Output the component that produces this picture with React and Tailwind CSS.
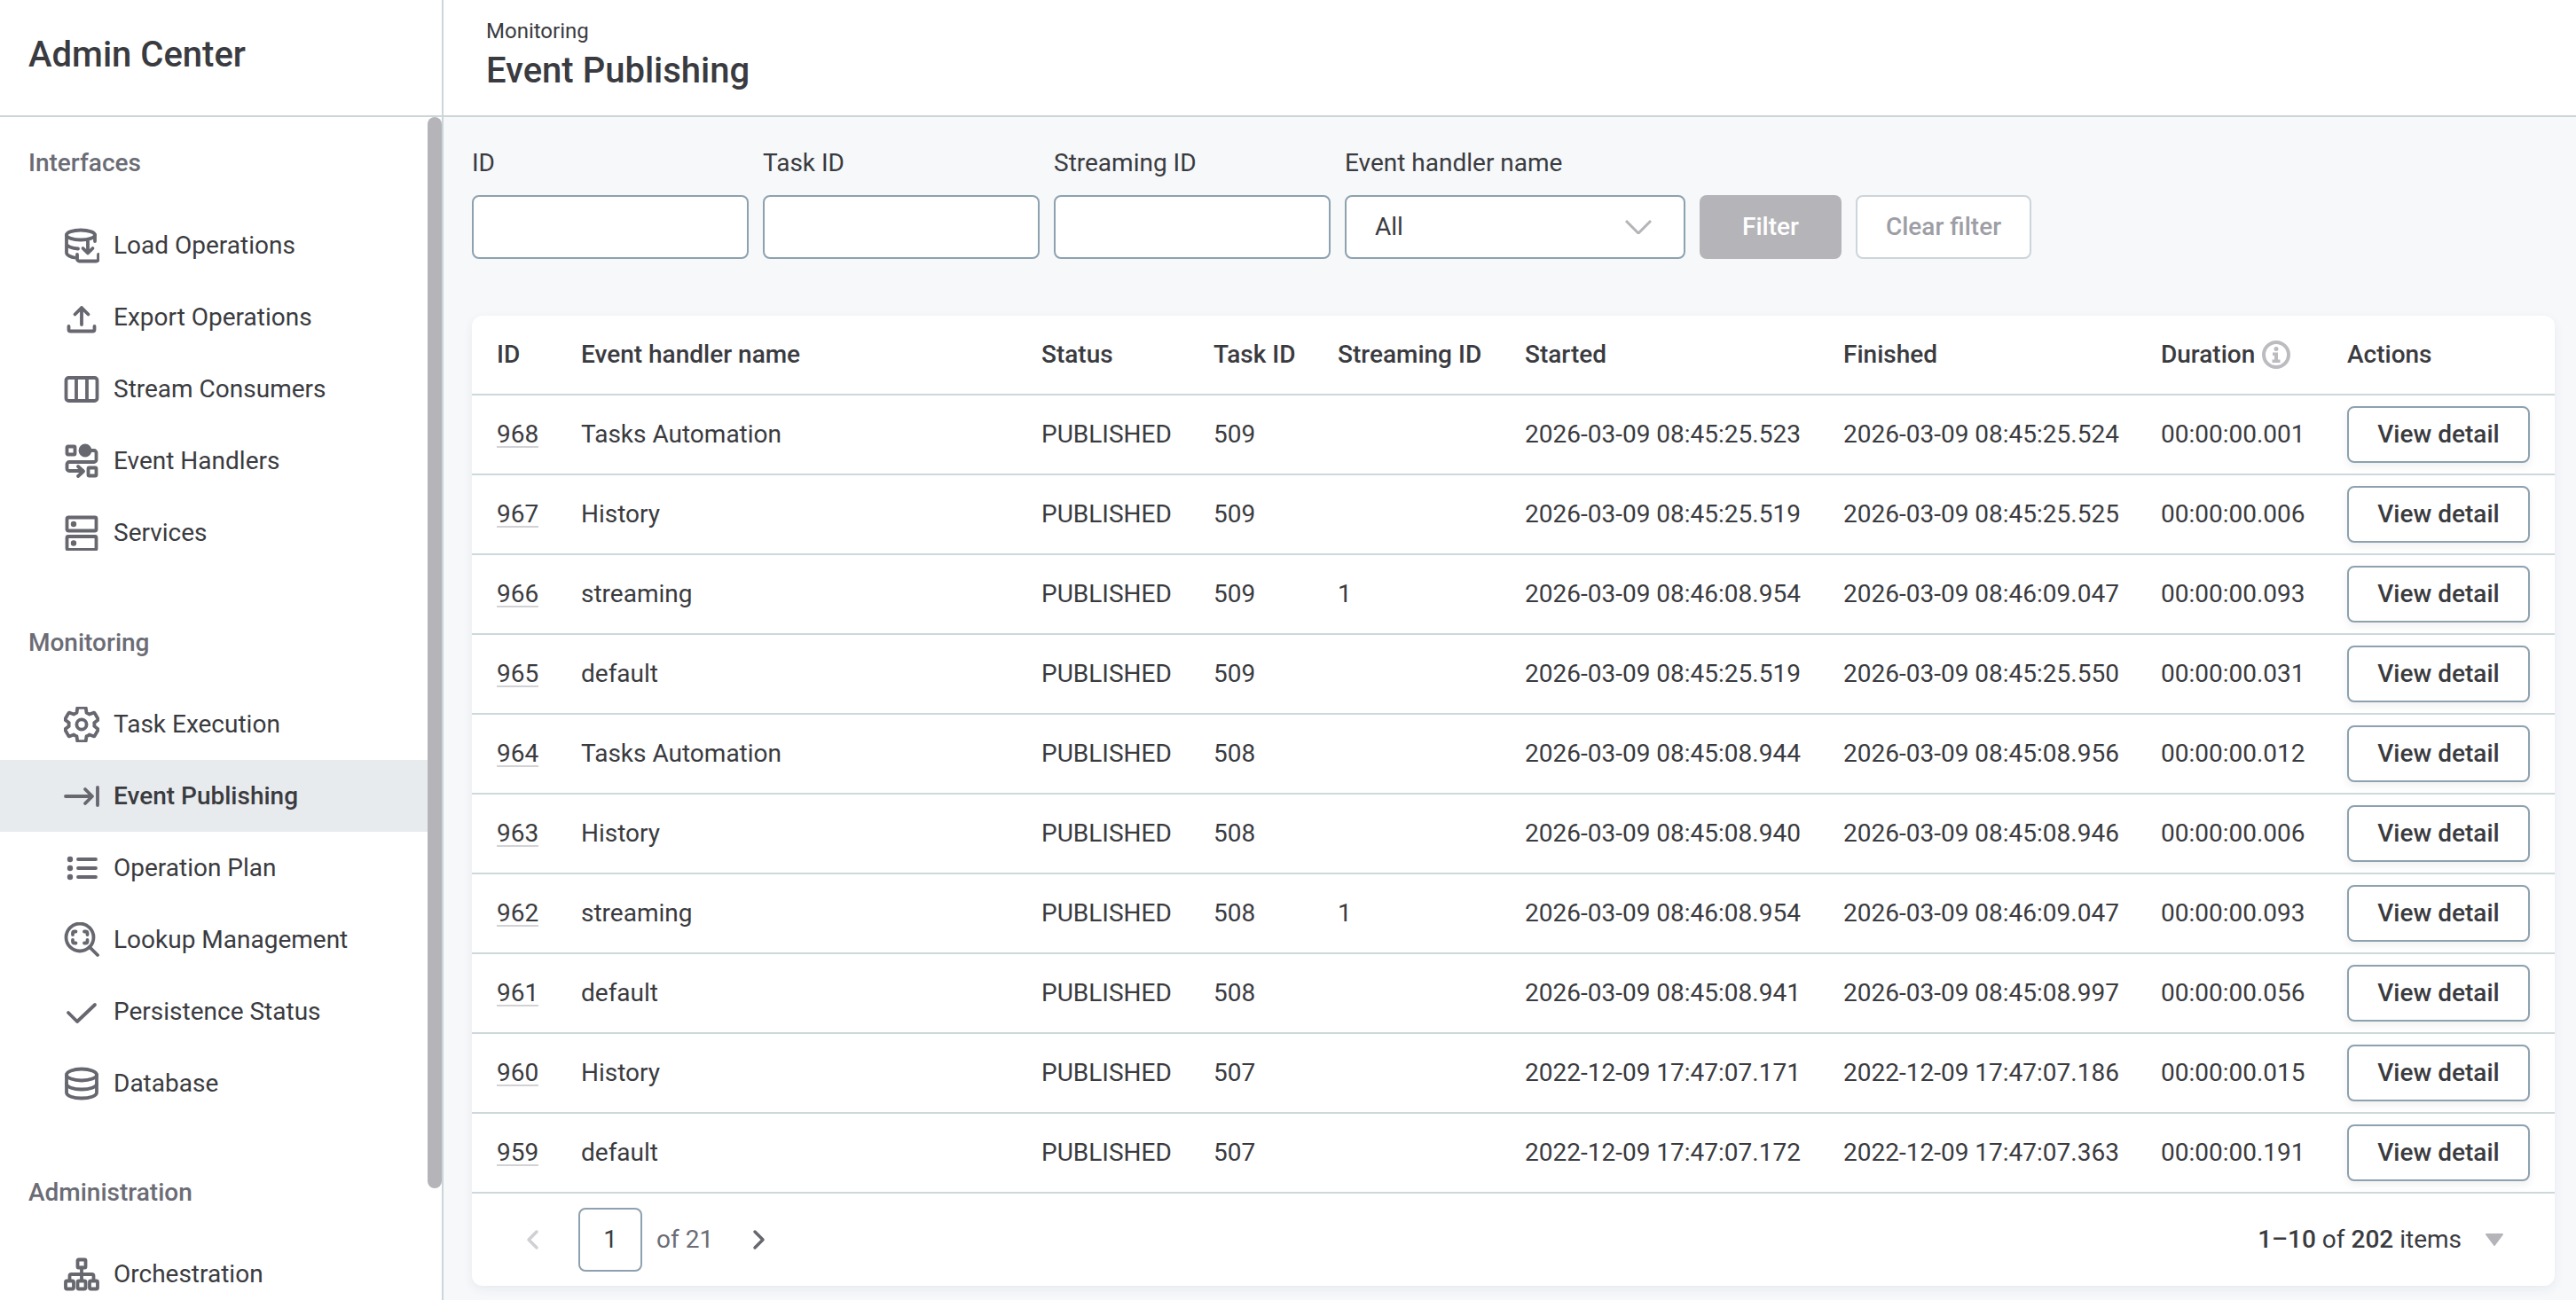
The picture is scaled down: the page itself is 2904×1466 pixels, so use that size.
import React from 'react';

const Svg = ({ children, fill = 'none' }) => (
  <svg viewBox="0 0 40 40" fill={fill} stroke="#66676f" strokeWidth="3.8" strokeLinecap="round" strokeLinejoin="round" className="w-[40px] h-[40px] shrink-0">
    {children}
  </svg>
);

const icons = {
  load: (
    <Svg>
      <ellipse cx="19" cy="8" rx="16" ry="5.5" />
      <path d="M3 8v20c0 3 6 5 9 5.500M3 18c0 3 7 5 13 5.500M35 8v7" />
      <path d="M27 15v13M21.500 23l5.500 5.500 5.500-5.500" />
      <path d="M15 30v5a2.500 2.500 0 0 0 2.500 2.500h19a2.500 2.500 0 0 0 2.500-2.500v-5" />
    </Svg>
  ),
  export: (
    <Svg>
      <path d="M20 9v19M12.500 16.500 20 9l7.500 7.500" />
      <path d="M5.500 30v3.500a2 2 0 0 0 2 2h25a2 2 0 0 0 2-2V30" />
    </Svg>
  ),
  stream: (
    <Svg>
      <rect x="2.500" y="7" width="35" height="26" rx="3" />
      <path d="M14 7v26M26 7v26" />
    </Svg>
  ),
  handlers: (
    <Svg>
      <rect x="3.500" y="3.500" width="9" height="9" rx="1" />
      <circle cx="24" cy="8" r="5.500" fill="#66676f" />
      <path d="M24 8h10a2.500 2.500 0 0 1 2.500 2.500v8a2.500 2.500 0 0 1-2.500 2.500H6a2.500 2.500 0 0 0-2.500 2.500v5a2.500 2.500 0 0 0 2.500 2.500h15" />
      <path d="m16 26 6 5.500-6 5.500" />
      <rect x="27.500" y="27.500" width="9" height="9" rx="1" />
    </Svg>
  ),
  services: (
    <Svg>
      <rect x="3.500" y="2.500" width="33" height="15" rx="1.500" />
      <rect x="3.500" y="24" width="33" height="15" rx="1.500" />
      <circle cx="11" cy="10" r="1.300" fill="#66676f" />
      <circle cx="11" cy="31.500" r="1.300" fill="#66676f" />
    </Svg>
  ),
  task: (
    <svg viewBox="2 2 20 20" fill="none" stroke="#66676f" strokeWidth="1.900" strokeLinejoin="round" className="w-[40px] h-[40px] shrink-0">
      <path d="M19.140 12.940c.040-.300.060-.610.060-.940 0-.320-.020-.640-.070-.940l2.030-1.580c.180-.140.230-.410.120-.610l-1.920-3.320c-.120-.220-.370-.290-.590-.220l-2.390.960c-.500-.380-1.030-.700-1.620-.940l-.360-2.540c-.040-.240-.240-.410-.480-.410h-3.840c-.240 0-.430.170-.470.410l-.360 2.540c-.590.240-1.130.570-1.620.940l-2.390-.960c-.220-.080-.470 0-.590.220L2.740 8.870c-.120.210-.080.470.120.610l2.030 1.580c-.050.300-.090.630-.090.940s.020.640.070.940l-2.030 1.580c-.180.140-.230.410-.120.610l1.920 3.320c.120.220.370.290.590.220l2.390-.960c.500.380 1.030.700 1.620.940l.360 2.540c.050.240.240.410.480.410h3.840c.240 0 .440-.170.470-.410l.360-2.540c.590-.240 1.130-.560 1.620-.940l2.390.960c.220.080.470 0 .590-.220l1.920-3.320c.120-.220.070-.470-.120-.610l-2.010-1.580z" />
      <circle cx="12" cy="12" r="2.800" />
    </svg>
  ),
  publish: (
    <Svg>
      <path d="M2 20h29M24 12l8 8-8 8M38 10v20" />
    </Svg>
  ),
  plan: (
    <Svg>
      <path d="M16 10h20M16 20h20M16 30h20" />
      <circle cx="7" cy="10" r="1.300" fill="#66676f" />
      <circle cx="7" cy="20" r="1.300" fill="#66676f" />
      <circle cx="7" cy="30" r="1.300" fill="#66676f" />
    </Svg>
  ),
  lookup: (
    <Svg>
      <circle cx="18" cy="17" r="15.500" />
      <path d="m29 28 9 9" />
      <path d="M10 14v-1.500a2 2 0 0 1 2-2h1.500M23 10.500h1.500a2 2 0 0 1 2 2V14M26.500 20v1.500a2 2 0 0 1-2 2H23M13.500 23.500H12a2 2 0 0 1-2-2V20" />
    </Svg>
  ),
  check: (
    <Svg>
      <path d="m5 21 10 10 20-19" />
    </Svg>
  ),
  database: (
    <Svg>
      <ellipse cx="20" cy="10" rx="17" ry="6.500" />
      <path d="M3 10v20c0 4 8 6.500 17 6.500s17-2.500 17-6.500V10" />
      <path d="M3 20c0 4 8 6.500 17 6.500S37 24 37 20" />
    </Svg>
  ),
  orchestration: (
    <Svg>
      <rect x="15.500" y="3.500" width="9" height="9" rx="1" />
      <path d="M20 12.500V27M6.500 27v-5a2 2 0 0 1 2-2h23a2 2 0 0 1 2 2v5" />
      <rect x="2" y="27.500" width="9" height="9" rx="1.500" />
      <rect x="15.500" y="27.500" width="9" height="9" rx="1.500" />
      <rect x="29" y="27.500" width="9" height="9" rx="1.500" />
    </Svg>
  ),
};

const nav = [
  { title: 'Interfaces', items: [['Load Operations', 'load'], ['Export Operations', 'export'], ['Stream Consumers', 'stream'], ['Event Handlers', 'handlers'], ['Services', 'services']] },
  { title: 'Monitoring', items: [['Task Execution', 'task'], ['Event Publishing', 'publish'], ['Operation Plan', 'plan'], ['Lookup Management', 'lookup'], ['Persistence Status', 'check'], ['Database', 'database']] },
  { title: 'Administration', items: [['Orchestration', 'orchestration']] },
];

const rows = [
  ['968', 'Tasks Automation', '509', '', '2026-03-09 08:45:25.523', '2026-03-09 08:45:25.524', '00:00:00.001'],
  ['967', 'History', '509', '', '2026-03-09 08:45:25.519', '2026-03-09 08:45:25.525', '00:00:00.006'],
  ['966', 'streaming', '509', '1', '2026-03-09 08:46:08.954', '2026-03-09 08:46:09.047', '00:00:00.093'],
  ['965', 'default', '509', '', '2026-03-09 08:45:25.519', '2026-03-09 08:45:25.550', '00:00:00.031'],
  ['964', 'Tasks Automation', '508', '', '2026-03-09 08:45:08.944', '2026-03-09 08:45:08.956', '00:00:00.012'],
  ['963', 'History', '508', '', '2026-03-09 08:45:08.940', '2026-03-09 08:45:08.946', '00:00:00.006'],
  ['962', 'streaming', '508', '1', '2026-03-09 08:46:08.954', '2026-03-09 08:46:09.047', '00:00:00.093'],
  ['961', 'default', '508', '', '2026-03-09 08:45:08.941', '2026-03-09 08:45:08.997', '00:00:00.056'],
  ['960', 'History', '507', '', '2022-12-09 17:47:07.171', '2022-12-09 17:47:07.186', '00:00:00.015'],
  ['959', 'default', '507', '', '2022-12-09 17:47:07.172', '2022-12-09 17:47:07.363', '00:00:00.191'],
];

function Sidebar() {
  return (
    <aside className="relative w-[500px] shrink-0 h-full bg-white border-r-2 border-[#ccd5da] overflow-hidden">
      <div className="h-[132px] border-b-2 border-[#ccd5da] flex items-center pl-[32px] pb-[6px]">
        <div className="text-[40px] leading-[52px] font-medium text-[#3a3b40]">Admin Center</div>
      </div>
      <div className="w-[482px] pt-[34px]">
        {nav.map((section) => {
          const first = section.title === 'Interfaces';
          return (
            <div key={section.title} className={first ? 'mb-[66px]' : 'mb-[65px]'}>
              <div className={first
                ? 'pl-[32px] text-[28px] leading-[36px] font-medium text-[#6b6c75] mb-[34px]'
                : 'pl-[32px] text-[28px] leading-[36px] font-medium text-[#6b6c75] mb-[33px]'}
              >
                {section.title}
              </div>
              {section.items.map(([label, icon]) => {
                const active = label === 'Event Publishing';
                return (
                  <div
                    key={label}
                    className={active
                      ? 'h-[81px] flex items-center gap-[16px] pl-[72px] bg-[#e8ebee] text-[28px] font-medium text-[#3a3b40]'
                      : 'h-[81px] flex items-center gap-[16px] pl-[72px] text-[28px] text-[#3a3b40]'}
                  >
                    {icons[icon]}
                    <span>{label}</span>
                  </div>
                );
              })}
            </div>
          );
        })}
      </div>
      {/* scrollbar thumb */}
      <div className="absolute left-[482px] top-[132px] w-[16px] h-[1208px] rounded-full bg-[#b5b5b9]" />
    </aside>
  );
}

function TextField({ label }) {
  return (
    <div className="w-[312px]">
      <div className="text-[28px] leading-[36px] text-[#3a3b40] mb-[18px]">{label}</div>
      <div className="h-[72px] bg-white border-2 border-[#8da1af] rounded-[8px]" />
    </div>
  );
}

function Filters() {
  return (
    <div className="flex items-end gap-[16px] mb-[64px]">
      <TextField label="ID" />
      <TextField label="Task ID" />
      <TextField label="Streaming ID" />
      <div className="w-[384px]">
        <div className="text-[28px] leading-[36px] text-[#3a3b40] mb-[18px]">Event handler name</div>
        <div className="h-[72px] bg-white border-2 border-[#8da1af] rounded-[8px] flex items-center justify-between pl-[32px] pr-[36px] text-[28px] text-[#3a3b40]">
          <span>All</span>
          <svg viewBox="0 0 30 16" fill="none" stroke="#b5b5b9" strokeWidth="3" className="w-[30px] h-[16px]">
            <path d="M1 1l14 14L29 1" />
          </svg>
        </div>
      </div>
      <button className="h-[72px] w-[160px] rounded-[8px] bg-[#b5b5b9] text-white text-[28px] font-medium">Filter</button>
      <button className="h-[72px] w-[198px] rounded-[8px] bg-white border-2 border-[#ccd5da] text-[#9d9ea5] text-[28px] font-medium">Clear filter</button>
    </div>
  );
}

function InfoIcon() {
  return (
    <svg viewBox="0 0 32 32" className="w-[32px] h-[32px] shrink-0">
      <circle cx="16" cy="16" r="14" fill="none" stroke="#bcbcc0" strokeWidth="4" />
      <circle cx="16" cy="9.500" r="2.500" fill="#bcbcc0" />
      <path d="M12 13.500h6v8h2.500v3.500h-9v-3.500H14v-4.500h-2z" fill="#bcbcc0" />
    </svg>
  );
}

function EventTable() {
  const th = 'text-left font-medium pl-[28px] pr-0';
  const td = 'pl-[28px] pr-0 whitespace-nowrap';
  return (
    <table className="w-full table-fixed border-collapse text-[28px] text-[#3a3b40]">
      <colgroup>
        <col className="w-[95px]" />
        <col className="w-[519px]" />
        <col className="w-[194px]" />
        <col className="w-[140px]" />
        <col className="w-[211px]" />
        <col className="w-[359px]" />
        <col className="w-[358px]" />
        <col className="w-[210px]" />
        <col className="w-[262px]" />
      </colgroup>
      <thead>
        <tr className="h-[89px] border-b-2 border-[#ccd8dc]">
          <th className={th}>ID</th>
          <th className={th}>Event handler name</th>
          <th className={th}>Status</th>
          <th className={th}>Task ID</th>
          <th className={th + ' whitespace-nowrap'}>Streaming ID</th>
          <th className={th}>Started</th>
          <th className={th}>Finished</th>
          <th className={th}>
            <span className="flex items-center gap-[8px]">Duration <InfoIcon /></span>
          </th>
          <th className={th}>Actions</th>
        </tr>
      </thead>
      <tbody>
        {rows.map((r) => (
          <tr key={r[0]} className="h-[90px] border-b-2 border-[#ccd8dc]">
            <td className={td}>
              <span className="border-b-2 border-[#d2d2d6] leading-[27px] inline-block">{r[0]}</span>
            </td>
            <td className={td}>{r[1]}</td>
            <td className={td}>PUBLISHED</td>
            <td className={td}>{r[2]}</td>
            <td className={td}>{r[3]}</td>
            <td className={td}>{r[4]}</td>
            <td className={td}>{r[5]}</td>
            <td className={td}>{r[6]}</td>
            <td className={td}>
              <button className="w-[206px] h-[64px] bg-white border-2 border-[#8da1af] rounded-[8px] font-medium shadow-[0_4px_8px_rgba(60,70,80,0.08)]">View detail</button>
            </td>
          </tr>
        ))}
      </tbody>
    </table>
  );
}

function Pagination() {
  return (
    <div className="h-[104px] flex items-center justify-between pr-[58px] text-[28px]">
      <div className="flex items-center">
        <svg viewBox="0 0 16 24" fill="none" stroke="#d0d0d4" strokeWidth="3.500" strokeLinecap="round" strokeLinejoin="round" className="ml-[60px] w-[16px] h-[24px]">
          <path d="M13 3 4 12l9 9" />
        </svg>
        <div className="ml-[44px] w-[72px] h-[72px] flex items-center justify-center border-2 border-[#8da1af] rounded-[8px] text-[#3a3b40]">1</div>
        <div className="ml-[16px] text-[#6b6c75]">of 21</div>
        <svg viewBox="0 0 16 24" fill="none" stroke="#66676f" strokeWidth="3.500" strokeLinecap="round" strokeLinejoin="round" className="ml-[44px] w-[16px] h-[24px]">
          <path d="m3 3 9 9-9 9" />
        </svg>
      </div>
      <div className="flex items-center text-[#3a3b40]">
        <span>
          <span className="font-medium">1–10</span> of <span className="font-medium">202</span> items
        </span>
        <svg viewBox="0 0 20 14" fill="#b5b5b9" stroke="#b5b5b9" strokeWidth="2" strokeLinejoin="round" className="ml-[27px] w-[20px] h-[14px]">
          <path d="M1 1h18l-9 12z" />
        </svg>
      </div>
    </div>
  );
}

export default function App() {
  return (
    <div className="h-screen w-full flex bg-[#f6f8fa] overflow-hidden [font-family:Roboto,sans-serif]">
      <Sidebar />
      <div className="flex-1 min-w-0 h-full flex flex-col">
        <header className="h-[132px] shrink-0 bg-white border-b-2 border-[#ccd5da] pl-[48px] pt-[19px]">
          <div className="text-[24px] leading-[32px] text-[#3a3b40]">Monitoring</div>
          <div className="mt-[3px] text-[40px] leading-[52px] font-medium text-[#3a3b40]">Event Publishing</div>
        </header>
        <main className="flex-1 pl-[32px] pr-[24px] pt-[34px]">
          <Filters />
          <div className="bg-white rounded-[12px] shadow-[0_4px_12px_rgba(60,70,80,0.07)] overflow-hidden">
            <EventTable />
            <Pagination />
          </div>
        </main>
      </div>
    </div>
  );
}
